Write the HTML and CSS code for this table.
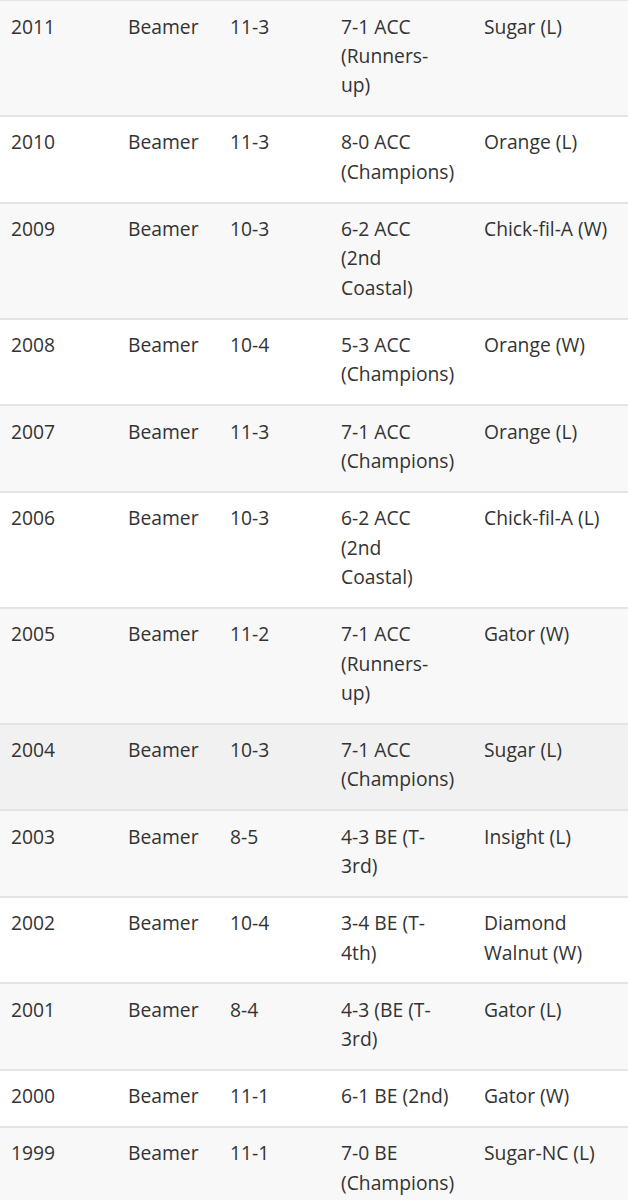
FILE: index.html
```html
<!DOCTYPE html>
<html lang="en">
<head>
<meta charset="utf-8">
<title>Virginia Tech seasons</title>
<link rel="stylesheet" href="styles.css">
</head>
<body>
<table class="seasons">
  <colgroup>
    <col class="c-year"><col class="c-coach"><col class="c-rec"><col class="c-conf"><col class="c-bowl">
  </colgroup>
  <tbody>
    <tr><td>2011</td><td>Beamer</td><td>11-3</td><td>7-1 ACC (Runners-up)</td><td>Sugar (L)</td></tr>
    <tr><td>2010</td><td>Beamer</td><td>11-3</td><td>8-0 ACC (Champions)</td><td>Orange (L)</td></tr>
    <tr><td>2009</td><td>Beamer</td><td>10-3</td><td>6-2 ACC (2nd Coastal)</td><td>Chick-fil-A (W)</td></tr>
    <tr><td>2008</td><td>Beamer</td><td>10-4</td><td>5-3 ACC (Champions)</td><td>Orange (W)</td></tr>
    <tr><td>2007</td><td>Beamer</td><td>11-3</td><td>7-1 ACC (Champions)</td><td>Orange (L)</td></tr>
    <tr><td>2006</td><td>Beamer</td><td>10-3</td><td>6-2 ACC (2nd Coastal)</td><td>Chick-fil-A (L)</td></tr>
    <tr><td>2005</td><td>Beamer</td><td>11-2</td><td>7-1 ACC (Runners-up)</td><td>Gator (W)</td></tr>
    <tr class="hover"><td>2004</td><td>Beamer</td><td>10-3</td><td>7-1 ACC (Champions)</td><td>Sugar (L)</td></tr>
    <tr><td>2003</td><td>Beamer</td><td>8-5</td><td>4-3 BE (T-3rd)</td><td>Insight (L)</td></tr>
    <tr><td>2002</td><td>Beamer</td><td>10-4</td><td>3-4 BE (T-4th)</td><td>Diamond Walnut (W)</td></tr>
    <tr><td>2001</td><td>Beamer</td><td>8-4</td><td>4-3 (BE (T-3rd)</td><td>Gator (L)</td></tr>
    <tr><td>2000</td><td>Beamer</td><td>11-1</td><td>6-1 BE (2nd)</td><td>Gator (W)</td></tr>
    <tr><td>1999</td><td>Beamer</td><td>11-1</td><td>7-0 BE (Champions)</td><td>Sugar-NC (L)</td></tr>
  </tbody>
</table>
</body>
</html>
```
FILE: styles.css
```css
html, body {
  margin: 0;
  padding: 0;
  background: #ffffff;
}

body {
  font-family: "Open Sans", "Liberation Sans", sans-serif;
  font-size: 19.3px;
  line-height: 29.4px;
  color: #333333;
  overflow: hidden;
}

.seasons {
  border-collapse: collapse;
  table-layout: fixed;
  width: 632px;
  margin: -1px 0 0 -4px;
}

.c-year { width: 117px; }
.c-coach { width: 102px; }
.c-rec { width: 111px; }
.c-conf { width: 143px; }
.c-bowl { width: 159px; }

.seasons td {
  vertical-align: top;
  padding: 10.5px 14px 15.25px 15px;
  border-top: 2px solid #e4e4e4;
}

.seasons tr:nth-child(odd) td {
  background: #f8f8f8;
}

.seasons tr:nth-child(even) td {
  background: #ffffff;
}

.seasons tr.hover td {
  background: #f1f1f1;
}
```
